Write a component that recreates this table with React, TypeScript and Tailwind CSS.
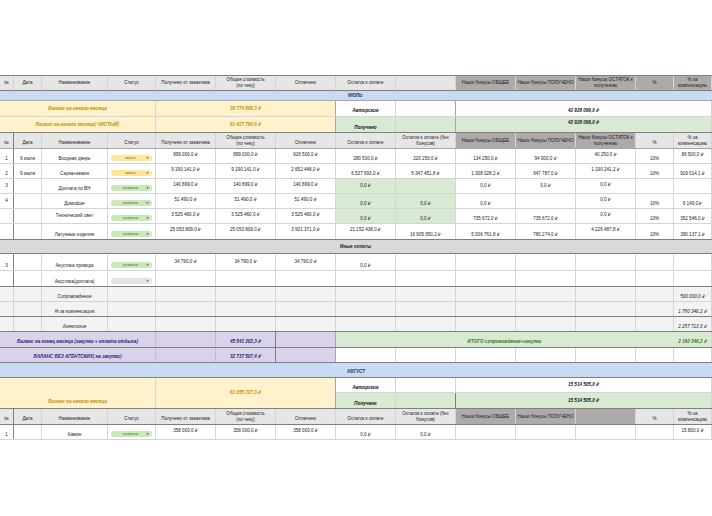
import React from 'react';

const GRID =
  'grid grid-cols-[14px_28px_66px_48px_60px_60px_60px_60px_60px_60px_60px_60px_38px_38px]';
const SPAN: Record<number, string> = {
  1: 'col-span-1',
  2: 'col-span-2',
  3: 'col-span-3',
  4: 'col-span-4',
  5: 'col-span-5',
  6: 'col-span-6',
  7: 'col-span-7',
};
const VA: Record<string, string> = {
  t: 'items-start pt-[3px]',
  b: 'items-end pb-[1px]',
  c: 'items-center',
};
const LINE = 'border-[#d4d4d4]';
const DARK = 'border-[#7f7f7f]';
const MID = 'border-[#a6a6a6]';
const LG = 'bg-[#e7e6e6]';
const DG = 'bg-[#aeaaaa]';
const YEL = 'bg-[#fff2cc]';
const GRN = 'bg-[#d9ead3]';
const LAV = 'bg-[#d9d2e9]';
const GOLD = 'text-[#bf9000] font-bold italic';
const NAVY = 'text-[#27217a] font-bold italic';
const BI = 'font-bold italic text-[#111]';

type V = 't' | 'b' | 'c';

function C({
  s = 1,
  v = 'c',
  cls = '',
  bc = LINE,
  wrap = false,
  children,
}: {
  s?: number;
  v?: V;
  cls?: string;
  bc?: string;
  wrap?: boolean;
  children?: React.ReactNode;
}) {
  return (
    <div
      className={`${SPAN[s]} flex justify-center text-center ${VA[v]} border-r ${bc} overflow-hidden ${
        wrap ? 'whitespace-normal' : 'whitespace-nowrap'
      } leading-[6px] ${cls}`}
    >
      {children}
    </div>
  );
}

function Lines({ t }: { t: string }) {
  const parts = t.split('|');
  return (
    <div className="flex flex-col items-center leading-[6px]">
      {parts.map((p, i) => (
        <span key={i}>{p}</span>
      ))}
    </div>
  );
}

function Pill({ t, c }: { t: string; c: 'y' | 'g' | 'e' }) {
  const bg =
    c === 'y'
      ? 'bg-[#ffe599] text-[#7f6000]'
      : c === 'g'
      ? 'bg-[#c9e7b8] text-[#38761d]'
      : 'bg-[#e3e3e3]';
  return (
    <div
      className={`ml-[3px] w-[41px] h-[6px] rounded-full ${bg} flex items-center text-[4px] leading-[6px]`}
    >
      <span className="flex-1 text-center pl-[4px]">{t}</span>
      <span className="text-[3px] pr-[3px] text-[#333]">▼</span>
    </div>
  );
}

type D = [string, V?, string?];

function DataRow({
  h,
  bb = LINE,
  bg = '',
  cells,
  pill,
  firstDark = true,
}: {
  h: string;
  bb?: string;
  bg?: string;
  cells: D[];
  pill?: React.ReactNode;
  firstDark?: boolean;
}) {
  return (
    <div className={`${GRID} ${h} border-b ${bb} ${bg}`}>
      {cells.map((c, i) =>
        i === 3 ? (
          <div key={i} className={`flex items-end pb-[2px] border-r ${LINE}`}>
            {pill}
          </div>
        ) : (
          <C key={i} v={c[1] ?? 'c'} cls={c[2] ?? ''} bc={i === 0 && firstDark ? DARK : LINE}>
            {c[0]}
          </C>
        )
      )}
    </div>
  );
}

function Header({
  h,
  bb,
  items,
  colors,
  top = false,
  firstDark = false,
}: {
  h: string;
  bb: string;
  items: [string, V][];
  colors: string[];
  top?: boolean;
  firstDark?: boolean;
}) {
  return (
    <div className={`${GRID} ${h} border-b ${bb} ${top ? 'border-t' : ''}`}>
      {items.map((it, i) => (
        <C key={i} v={it[1]} cls={`${colors[i]} ${it[1] === 'b' ? 'pb-[2px]' : ''}`} bc={i === 0 && firstDark ? DARK : LINE}>
          <Lines t={it[0]} />
        </C>
      ))}
    </div>
  );
}

const COLS1 = [LG, LG, LG, LG, LG, LG, LG, LG, LG, DG, DG, DG, DG, DG];
const COLS2 = [LG, LG, LG, LG, LG, LG, LG, LG, LG, DG, DG, DG, LG, LG];

const H1: [string, V][] = [
  ['№', 'c'],
  ['Дата', 'c'],
  ['Наименование', 'c'],
  ['Статус', 'c'],
  ['Получено от заказчика', 'c'],
  ['Общая стоимость|(по чеку)', 'c'],
  ['Оплачено', 'c'],
  ['Остаток к оплате', 'c'],
  ['', 'c'],
  ['Наши бонусы ОБЩЕЕ', 'c'],
  ['Наши бонусы ПОЛУЧЕНО', 'c'],
  ['Наши бонусы ОСТАТОК к|получению', 'c'],
  ['%', 'c'],
  ['% за|компенсацию', 'c'],
];

const H2: [string, V][] = [
  ['№', 'b'],
  ['Дата', 'b'],
  ['Наименование', 'b'],
  ['Статус', 'b'],
  ['Получено от заказчика', 'b'],
  ['Общая стоимость|(по чеку)', 'c'],
  ['Оплачено', 'b'],
  ['Остаток к оплате', 'b'],
  ['Остаток к оплате (без|бонусов)', 'c'],
  ['Наши бонусы ОБЩЕЕ', 'c'],
  ['Наши бонусы ПОЛУЧЕНО', 'c'],
  ['Наши бонусы ОСТАТОК к|получению', 'c'],
  ['%', 'b'],
  ['% за|компенсацию', 'c'],
];

const H3: [string, V][] = [
  ['№', 'b'],
  ['Дата', 'b'],
  ['Наименование', 'b'],
  ['Статус', 'b'],
  ['Получено от заказчика', 'b'],
  ['Общая стоимость|(по чеку)', 'c'],
  ['Оплачено', 'b'],
  ['Остаток к оплате', 'b'],
  ['Остаток к оплате (без|бонусов)', 'c'],
  ['Наши бонусы ОБЩЕЕ', 'c'],
  ['Наши бонусы ПОЛУЧЕНО', 'c'],
  ['', 'c'],
  ['%', 'b'],
  ['% за|компенсацию', 'c'],
];

const E: D = [''];

export default function App() {
  return (
    <div className="w-[712px] h-[516px] bg-white pt-[75px] font-['Liberation_Sans',Arial,sans-serif] text-[4.6px] text-[#1a1a1a] overflow-hidden">
      <Header h="h-[16px]" bb={DARK} items={H1} colors={COLS1} top />

      {/* July bar */}
      <div className={`h-[10px] border-b ${MID} bg-[#c9daf3] flex items-center pl-[348px] text-[#1f3864] font-bold leading-[6px]`}>
        ИЮЛЬ
      </div>

      {/* Balance rows */}
      <div className={`${GRID} h-[16px] border-b ${LINE}`}>
        <C s={4} cls={`${YEL} ${GOLD}`}>Баланс на начало месяца</C>
        <C s={3} cls={`${YEL} ${GOLD}`} bc={MID}>38 774 508,3 ₽</C>
        <C v="b" cls={`${BI} pb-[2px]`}>Авторские</C>
        <C bc={MID}></C>
        <C s={5} v="b" cls={`${BI} pb-[2px]`}>42 928 099,0 ₽</C>
      </div>
      <div className={`${GRID} h-[16px] border-b ${DARK}`}>
        <C s={4} cls={`${YEL} ${GOLD}`}>Баланс на начало месяца( ЧИСТЫЙ)</C>
        <C s={3} cls={`${YEL} ${GOLD}`} bc={MID}>51 427 790,6 ₽</C>
        <C v="b" cls={`${GRN} ${BI}`}>Получено</C>
        <C cls={GRN} bc={MID}></C>
        <C s={5} v="t" cls={`${GRN} ${BI}`}>42 928 099,0 ₽</C>
      </div>

      <Header h="h-[16px]" bb={MID} items={H2} colors={COLS2} firstDark />

      <DataRow
        h="h-[15px]"
        pill={<Pill t="аванс" c="y" />}
        cells={[
          ['1', 'b'], ['9 июля', 'b'], ['Входная дверь', 'b'], E,
          ['899 000,0 ₽', 't'], ['899 000,0 ₽', 't'], ['626 500,0 ₽', 't'],
          ['280 500,0 ₽', 'b'], ['220 250,0 ₽', 'b'], ['134 250,0 ₽', 'b'],
          ['94 000,0 ₽', 'b'], ['40 250,0 ₽', 't'], ['10%', 'b'], ['89 500,0 ₽', 't'],
        ]}
      />
      <DataRow
        h="h-[15px]"
        pill={<Pill t="аванс" c="y" />}
        cells={[
          ['2', 'b'], ['9 июля', 'b'], ['Сауна+камин', 'b'], E,
          ['9 190 141,0 ₽', 't'], ['9 190 141,0 ₽', 't'], ['2 652 448,0 ₽', 't'],
          ['6 537 693,0 ₽', 'b'], ['5 347 451,8 ₽', 'b'], ['1 308 028,2 ₽', 'b'],
          ['647 787,0 ₽', 'b'], ['1 190 241,2 ₽', 't'], ['10%', 'b'], ['919 014,1 ₽', 'b'],
        ]}
      />
      <DataRow
        h="h-[15px]"
        pill={<Pill t="освоено" c="g" />}
        cells={[
          ['3', 'c'], E, ['Доплата по ВН', 'b'], E,
          ['140 899,0 ₽', 't'], ['140 899,0 ₽', 't'], ['140 899,0 ₽', 't'],
          ['0,0 ₽', 'c', GRN], ['', 'c', GRN], ['0,0 ₽', 'c'],
          ['0,0 ₽', 'c'], ['0,0 ₽', 't'], E, E,
        ]}
      />
      <DataRow
        h="h-[15px]"
        pill={<Pill t="освоено" c="g" />}
        cells={[
          ['4', 'c'], E, ['Домофон', 'b'], E,
          ['51 490,0 ₽', 't'], ['51 490,0 ₽', 't'], ['51 490,0 ₽', 't'],
          ['0,0 ₽', 'b', GRN], ['0,0 ₽', 'b', GRN], ['0,0 ₽', 'b'],
          E, ['0,0 ₽', 't'], ['10%', 'b'], ['9 149,0 ₽', 'b'],
        ]}
      />
      <DataRow
        h="h-[15px]"
        pill={<Pill t="освоено" c="g" />}
        cells={[
          E, E, ['Технический свет', 'c'], E,
          ['3 525 460,0 ₽', 't'], ['3 525 460,0 ₽', 't'], ['3 525 460,0 ₽', 't'],
          ['0,0 ₽', 'b', GRN], ['0,0 ₽', 'b', GRN], ['735 672,0 ₽', 'b'],
          ['735 672,0 ₽', 'b'], ['0,0 ₽', 't'], ['10%', 'b'], ['352 546,0 ₽', 'b'],
        ]}
      />
      <DataRow
        h="h-[16px]"
        bb={DARK}
        pill={<Pill t="освоено" c="g" />}
        cells={[
          E, E, ['Латунные изделия', 'b'], E,
          ['25 053 809,0 ₽', 't'], ['25 053 809,0 ₽', 't'], ['3 901 371,0 ₽', 't'],
          ['21 152 438,0 ₽', 't'], ['16 905 950,2 ₽', 'b'], ['5 006 761,8 ₽', 'b'],
          ['780 274,0 ₽', 'b'], ['4 226 487,8 ₽', 't'], ['10%', 'b'], ['390 137,1 ₽', 'b'],
        ]}
      />

      {/* Other payments bar */}
      <div className={`h-[14px] border-b ${DARK} bg-[#d9d9d9] flex items-center pl-[340px] font-bold text-[#222] leading-[6px]`}>
        Иные оплаты
      </div>

      <DataRow
        h="h-[17px]"
        pill={<Pill t="освоено" c="g" />}
        cells={[
          ['3', 'b'], E, ['Акустика провода', 'b'], E,
          ['34 790,0 ₽', 'c'], ['34 790,0 ₽', 'c'], ['34 790,0 ₽', 'c'],
          ['0,0 ₽', 'b'], E, E, E, E, E, E,
        ]}
      />
      <DataRow
        h="h-[16px]"
        bb={DARK}
        pill={<Pill t="" c="e" />}
        cells={[E, E, ['Акустика(доплата)', 'b'], E, E, E, E, E, E, E, E, E, E, E]}
      />
      <DataRow
        h="h-[15px]"
        bg="bg-[#f3f3f3]"
        firstDark={false}
        cells={[
          E, E, ['Сопровождение', 'b', 'italic'], E, E, E, E, E, E, E, E, E, E,
          ['500 000,0 ₽', 'b', 'italic'],
        ]}
      />
      <DataRow
        h="h-[15px]"
        bb={DARK}
        bg="bg-[#f3f3f3]"
        firstDark={false}
        cells={[
          E, E, ['% за компенсацию', 'b', 'italic'], E, E, E, E, E, E, E, E, E, E,
          ['1 780 346,2 ₽', 'b', 'italic'],
        ]}
      />
      <DataRow
        h="h-[15px]"
        bb={DARK}
        bg="bg-[#f3f3f3]"
        firstDark={false}
        cells={[
          E, E, ['Агентские', 'b', 'italic'], E, E, E, E, E, E, E, E, E, E,
          ['2 257 713,0 ₽', 'b', 'italic'],
        ]}
      />

      {/* Month end balances */}
      <div className={`${GRID} h-[16px] border-b ${DARK}`}>
        <C s={4} v="b" cls={`${LAV} ${NAVY} pb-[2px]`} bc="border-[#c4bcd9]">
          Баланс на конец месяца (закупки + оплата отдыха)
        </C>
        <C cls={LAV} bc="border-[#c4bcd9]"></C>
        <C v="b" cls={`${LAV} ${NAVY} pb-[2px]`} bc={DARK}>45 541 202,3 ₽</C>
        <C cls={LAV} bc={MID}></C>
        <C s={6} v="b" cls={`${GRN} text-[#38761d] font-bold italic pb-[2px]`} bc="border-[#d9ead3]">
          ИТОГО сопровождение+закупки
        </C>
        <C v="b" cls={`${GRN} text-[#38761d] font-bold italic pb-[2px]`}>2 160 346,2 ₽</C>
      </div>
      <div className={`${GRID} h-[15px] border-b ${DARK}`}>
        <C s={4} v="b" cls={`${LAV} ${NAVY} pb-[2px]`} bc="border-[#c4bcd9]">
          БАЛАНС БЕЗ АГЕНТСКИХ( на закупки)
        </C>
        <C cls={LAV} bc="border-[#c4bcd9]"></C>
        <C v="b" cls={`${LAV} ${NAVY} pb-[2px]`} bc={DARK}>32 737 507,4 ₽</C>
        <C cls={LAV} bc={MID}></C>
        <C></C>
        <C></C>
        <C></C>
        <C></C>
        <C></C>
        <C></C>
        <C></C>
      </div>

      {/* August bar */}
      <div className={`h-[15px] border-b ${DARK} bg-[#c9daf3] flex items-end pb-[2px] pl-[347px] text-[#1f3864] font-bold leading-[6px]`}>
        АВГУСТ
      </div>

      <div className={`${GRID} grid-rows-[15px_15px] border-b ${DARK}`}>
        <C s={4} v="b" cls={`row-span-2 ${YEL} ${GOLD} pb-[3px]`}>Баланс на начало месяца</C>
        <C s={3} v="c" cls={`row-span-2 ${YEL} ${GOLD}`} bc={MID}>61 055 707,3 ₽</C>
        <C v="b" cls={`${BI} border-b ${LINE}`}>Авторские</C>
        <C cls={`border-b ${LINE}`} bc={DARK}></C>
        <C s={5} v="c" cls={`${BI} border-b ${LINE}`}>15 514 505,0 ₽</C>
        <C v="b" cls={`${GRN} ${BI}`}>Получено</C>
        <C cls={GRN} bc={DARK}></C>
        <C s={5} v="c" cls={`${GRN} ${BI}`}>15 514 505,0 ₽</C>
      </div>

      <Header h="h-[16px]" bb={DARK} items={H3} colors={COLS2} firstDark />

      <DataRow
        h="h-[15px]"
        pill={<Pill t="освоено" c="g" />}
        cells={[
          ['1', 'b'], E, ['Камин', 'b'], E,
          ['358 000,0 ₽', 't'], ['358 000,0 ₽', 't'], ['358 000,0 ₽', 't'],
          ['0,0 ₽', 'b'], ['0,0 ₽', 'b'], E, E, E, E, ['15 800,0 ₽', 't'],
        ]}
      />
    </div>
  );
}
